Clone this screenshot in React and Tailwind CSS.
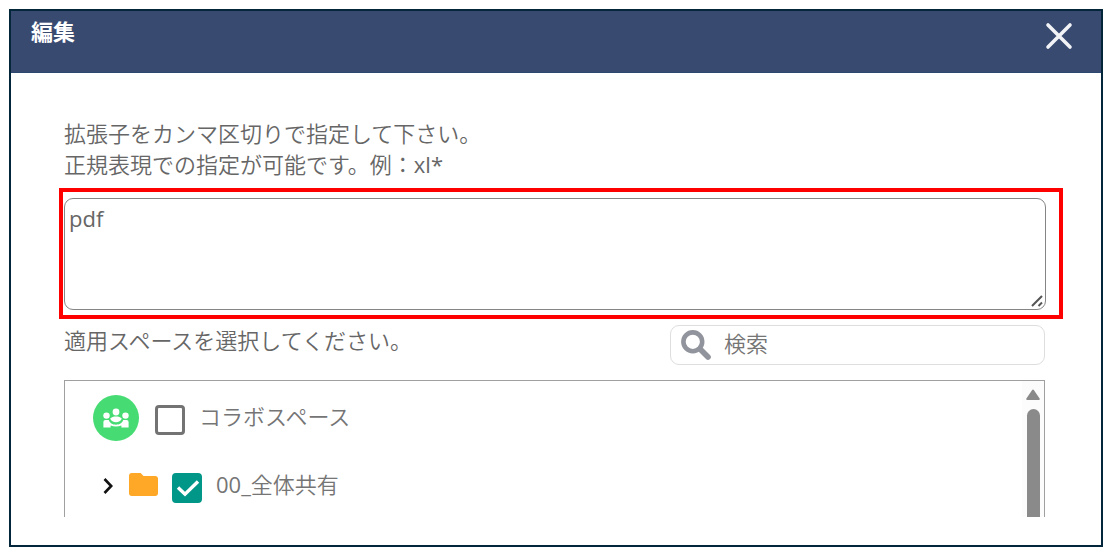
import React, { useState } from 'react';

const CloseIcon = () => (
    <svg viewBox="0 0 28 28" className="h-7 w-7" fill="none" stroke="#f2f3f7" strokeWidth="3.6" strokeLinecap="round">
        <path d="M3 3 25 25M25 3 3 25" />
    </svg>
);

const SearchIcon = () => (
    <svg viewBox="0 0 30 30" className="h-[30px] w-[30px] shrink-0" fill="none" stroke="#91949c">
        <circle cx="11.8" cy="11.8" r="9.4" strokeWidth="4.6" />
        <path d="M19 19 27 27" strokeWidth="5.6" strokeLinecap="round" />
    </svg>
);

const ResizeIcon = () => (
    <svg viewBox="0 0 12 12" className="pointer-events-none absolute right-[3px] bottom-[3px] h-3 w-3" fill="none" stroke="#555" strokeWidth="2">
        <path d="M1 11 11 1M7.5 11 11 7.5" />
    </svg>
);

const GroupIcon = () => (
    <svg viewBox="0 0 46 46" className="h-[46px] w-[46px] shrink-0">
        <circle cx="23" cy="23" r="23" fill="#46dc73" />
        <g fill="#fff">
            <circle cx="13.5" cy="20.6" r="3.2" />
            <circle cx="32.5" cy="20.6" r="3.2" />
            <circle cx="23" cy="17" r="3.4" />
            <path d="M17.2 23.6c1.2-1.7 3.4-2.2 5.8-2.2s4.6.5 5.8 2.2c-.9 2.5-3.3 3.7-5.8 3.7s-4.9-1.2-5.8-3.7z" />
            <path d="M10.4 27.2c0-1.3.9-2.1 2.1-2.1h3.3c.8 3 3.8 4.7 7.2 4.7s6.4-1.7 7.2-4.7h3.3c1.2 0 2.1.8 2.1 2.1v5.2h-7.2v-2c-3.2 1.4-7.6 1.4-10.8 0v2h-7.2z" />
        </g>
    </svg>
);

const ChevronIcon = () => (
    <svg viewBox="0 0 10 18" className="h-[18px] w-[10px]" fill="none" stroke="#111" strokeWidth="2.6">
        <path d="M1.5 2 8.2 9 1.5 16" />
    </svg>
);

const FolderIcon = () => (
    <svg viewBox="0 0 29 23" className="h-[23px] w-[29px] shrink-0" fill="#ffa726">
        <path d="M2.9 0H11.6L14.5 2.9H26.1A2.9 2.9 0 0 1 29 5.8V20.1A2.9 2.9 0 0 1 26.1 23H2.9A2.9 2.9 0 0 1 0 20.1V2.9A2.9 2.9 0 0 1 2.9 0z" />
    </svg>
);

const SpaceCheckbox = ({ checked, onChange, children }) => (
    <label className="flex items-start gap-[14px] text-[22px] leading-[30px] font-[350] text-[#757575]">
        <span className="relative mt-1 h-[30px] w-[30px]">
            <input
                type="checkbox"
                checked={checked}
                onChange={e => onChange(e.target.checked)}
                className="block h-[30px] w-[30px] appearance-none rounded-[4px] border-[3px] border-[#737373] bg-white checked:border-[#009688] checked:bg-[#009688]"
            />
            {checked && (
                <svg viewBox="0 0 30 30" className="pointer-events-none absolute inset-0" fill="none" stroke="#fff" strokeWidth="3.4">
                    <path d="M6 14.5 13 21.2 26 8.5" />
                </svg>
            )}
        </span>
        <span>{children}</span>
    </label>
);

export default function App() {
    const [extensions, setExtensions] = useState('pdf');
    const [keyword, setKeyword] = useState('');
    const [collabo, setCollabo] = useState(false);
    const [shared, setShared] = useState(true);

    return (
        <div className="bg-white p-[9px] pr-[10px] font-['Open_Sans','Noto_Sans_CJK_JP',sans-serif]">
            <section className="border-2 border-[#04263a] bg-white">
                <header className="flex h-[62px] items-start justify-between border-b border-[#2c4870] bg-[#394a70] pt-1 pr-7 pl-5">
                    <h1 className="text-[22px] leading-8 font-bold text-white">編集</h1>
                    <button type="button" aria-label="閉じる" className="mt-[7px]">
                        <CloseIcon />
                    </button>
                </header>

                <div className="pt-[45px] pr-14 pb-7 pl-[53px]">
                    <label htmlFor="extensions" className="block text-[22px] leading-[31px] font-[350] text-[#666]">
                        拡張子をカンマ区切りで指定して下さい。
                        <br />
                        正規表現での指定が可能です。例：<span className="font-normal">xl*</span>
                    </label>

                    <div className="mt-2 -mr-[18px] -ml-[5px] border-4 border-[#ff0000] pt-[6px] pr-[13px] pb-[5px] pl-px">
                        <div className="relative">
                            <textarea
                                id="extensions"
                                value={extensions}
                                onChange={e => setExtensions(e.target.value)}
                                className="block h-28 w-full resize-none rounded-[9px] border border-[#858585] px-1 pt-1 text-[22px] leading-[30px] font-normal text-[#666] outline-none"
                            />
                            <ResizeIcon />
                        </div>
                    </div>

                    <div className="mt-[6px] flex items-start justify-between">
                        <p className="text-[22px] leading-[31px] font-[350] text-[#666]">適用スペースを選択してください。</p>
                        <div className="flex h-10 w-[375px] items-center gap-[13px] rounded-[9px] border border-[#dedede] px-[10px]">
                            <SearchIcon />
                            <input
                                type="text"
                                aria-label="検索"
                                placeholder="検索"
                                value={keyword}
                                onChange={e => setKeyword(e.target.value)}
                                className="w-full min-w-0 pb-1 text-[22px] leading-[30px] font-[350] text-[#666] outline-none placeholder:text-[#757575]"
                            />
                        </div>
                    </div>

                    <div className="mt-[15px] flex h-[137px] justify-between overflow-hidden border border-b-0 border-[#a0a0a0]">
                        <ul className="flex flex-col gap-[22px] pt-[14px] pl-7">
                            <li className="flex h-[46px] items-center gap-4">
                                <GroupIcon />
                                <SpaceCheckbox checked={collabo} onChange={setCollabo}>
                                    コラボスペース
                                </SpaceCheckbox>
                            </li>
                            <li className="flex h-[46px] items-center pl-[10px]">
                                <button type="button" aria-label="展開" className="mr-4">
                                    <ChevronIcon />
                                </button>
                                <span className="mr-[14px] pb-1">
                                    <FolderIcon />
                                </span>
                                <SpaceCheckbox checked={shared} onChange={setShared}>
                                    <span className="font-normal">00_</span>全体共有
                                </SpaceCheckbox>
                            </li>
                        </ul>
                        <div className="flex w-[22px] flex-col items-center gap-[9px] bg-[#fcfcfc] pt-2">
                            <svg viewBox="0 0 14 11" className="h-[11px] w-[14px] shrink-0" fill="#8a8a8a" stroke="#8a8a8a" strokeWidth="2" strokeLinejoin="round">
                                <path d="M7 1.5 12.8 10H1.2z" />
                            </svg>
                            <div className="w-[13px] flex-1 rounded-t-full bg-[#8a8a8a]" />
                        </div>
                    </div>
                </div>
            </section>
        </div>
    );
}
